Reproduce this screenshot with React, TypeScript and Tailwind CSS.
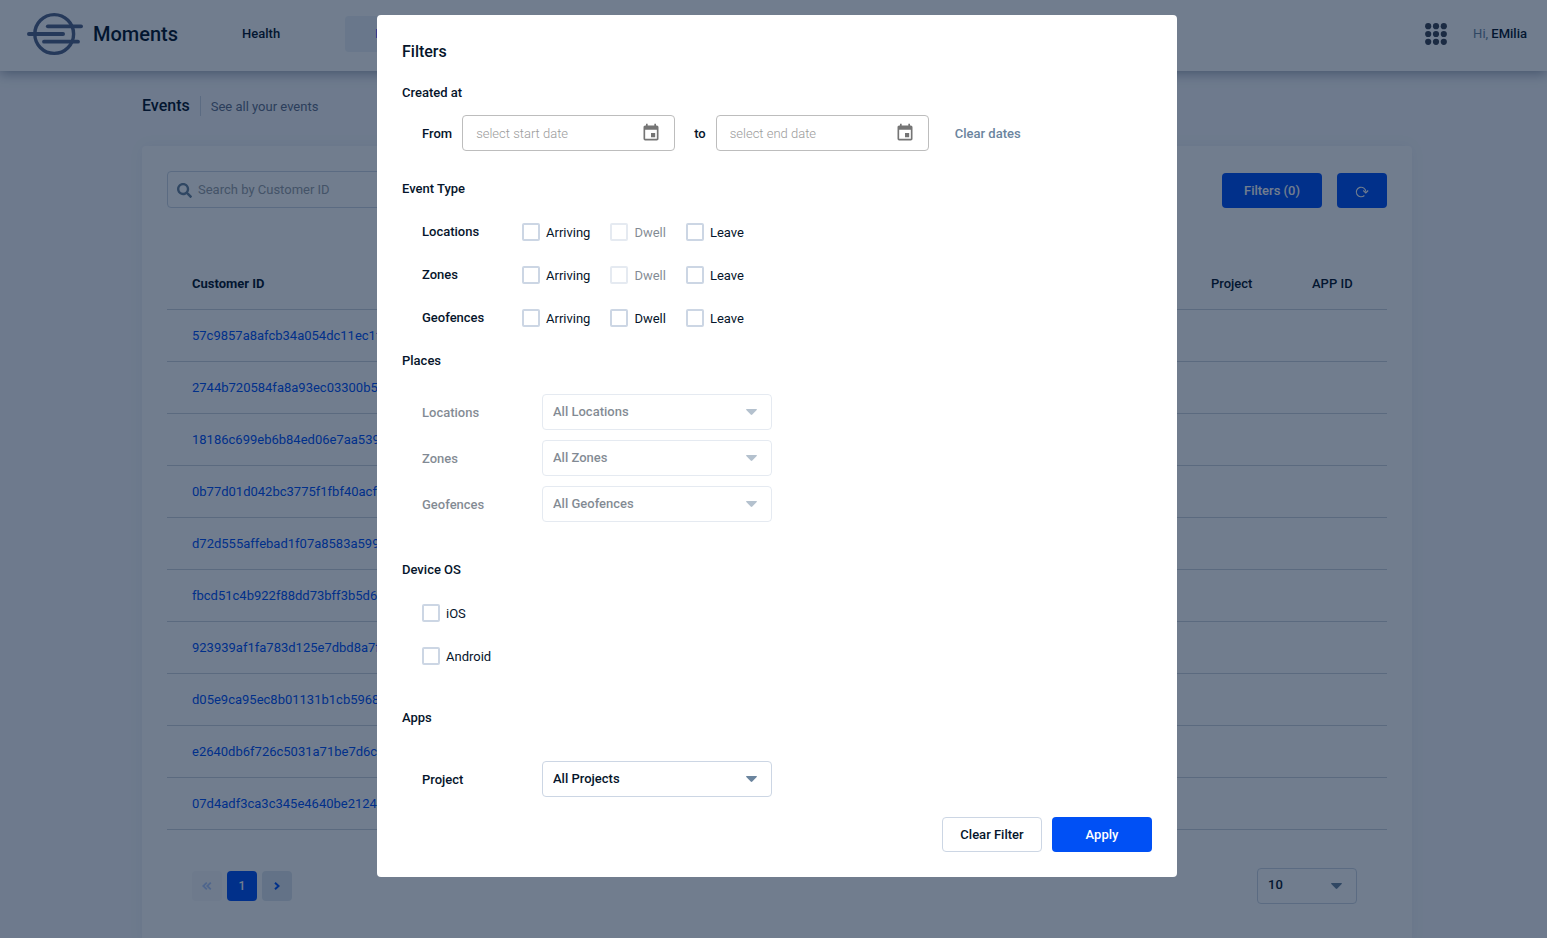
import type { ReactNode } from "react";
import { MdEvent } from "react-icons/md";
import { FaSearch } from "react-icons/fa";

const customerIds = [
  "57c9857a8afcb34a054dc11ec1f",
  "2744b720584fa8a93ec03300b5",
  "18186c699eb6b84ed06e7aa539",
  "0b77d01d042bc3775f1fbf40acf",
  "d72d555affebad1f07a8583a599",
  "fbcd51c4b922f88dd73bff3b5d6",
  "923939af1fa783d125e7dbd8a7f",
  "d05e9ca95ec8b01131b1cb5968",
  "e2640db6f726c5031a71be7d6c",
  "07d4adf3ca3c345e4640be2124",
];

const eventTypes = [
  { name: "Locations", dwell: false },
  { name: "Zones", dwell: false },
  { name: "Geofences", dwell: true },
];

function Logo() {
  return (
    <svg width="56" height="44" viewBox="0 0 56 44" fill="none" stroke="#53658a" aria-hidden="true">
      <circle cx="27.200" cy="22" r="19.400" strokeWidth="3.400" />
      <g strokeWidth="3.800" strokeLinecap="round">
        <path d="M20.800 14.300H54.100" />
        <path d="M1.900 22H36.100" />
        <path d="M17 29.700H51" />
      </g>
    </svg>
  );
}

function AppsGrid() {
  return (
    <svg width="22" height="22" viewBox="0 0 22 22" fill="#3c4456" aria-hidden="true">
      {[3.2, 11, 18.8].map((y) => [3.2, 11, 18.8].map((x) => <circle key={`${x}-${y}`} cx={x} cy={y} r="3.1" />))}
    </svg>
  );
}

function RefreshIcon() {
  return (
    <svg width="14" height="12" viewBox="0 0 14 12" fill="none" stroke="currentColor" strokeWidth="1.1" className="mx-auto mt-[3px]" aria-hidden="true">
      <path d="M9.400 9.500A4.800 4.800 0 1 1 10.900 5.800" />
      <path d="M8.300 4.500L10.800 6.900L13.200 4.500" />
    </svg>
  );
}

function Select({ id, value, disabled = false, label }: { id: string; value: string; disabled?: boolean; label?: string }) {
  return (
    <div className={disabled ? "relative w-full opacity-50" : "relative w-full"}>
      <select
        id={id}
        disabled={disabled}
        aria-label={label}
        className="h-9 w-full appearance-none rounded border border-[#ccd6e4] bg-transparent px-[10px] pb-px text-[13px] font-medium text-[#06152b] opacity-100"
      >
        <option>{value}</option>
      </select>
      <svg className="pointer-events-none absolute top-[15px] right-[15px]" width="11" height="6" viewBox="0 0 11 6" fill="#6b859e" aria-hidden="true">
        <path d="M0.600 0H10.400C10.900 0 11.100 0.500 10.700 0.900L6.300 5.500C5.800 6 5.200 6 4.700 5.500L0.300 0.900C-0.100 0.500 0.100 0 0.600 0Z" />
      </svg>
    </div>
  );
}

function Checkbox({ label, disabled = false }: { label: string; disabled?: boolean }) {
  return (
    <label className={disabled ? "flex h-[18px] items-center gap-[6px] opacity-50" : "flex h-[18px] items-center gap-[6px]"}>
      <input type="checkbox" disabled={disabled} className="size-[18px] appearance-none rounded-xs border-2 border-[#ccd6e4]" />
      <span className="pt-0.5 leading-5">{label}</span>
    </label>
  );
}

function DateField({ id, placeholder }: { id: string; placeholder: string }) {
  return (
    <div className="flex h-9 w-[213px] items-center rounded border border-[#bdbdbd] pr-[13px] pl-[13px]">
      <input id={id} type="text" placeholder={placeholder} className="min-w-0 flex-1 pt-0.5 font-light outline-none placeholder:text-[#9b9b9b]" />
      <button type="button" aria-label="Open calendar">
        <MdEvent size={20} color="#757575" />
      </button>
    </div>
  );
}

function SectionTitle({ children }: { children: ReactNode }) {
  return <h3 className="leading-5 font-medium">{children}</h3>;
}

function FiltersDialog() {
  return (
    <form role="dialog" aria-label="Filters" className="flex w-[800px] flex-col rounded bg-white p-[25px]">
      <h2 className="text-base leading-6 font-medium">Filters</h2>

      <section className="mt-[19px]">
        <SectionTitle>Created at</SectionTitle>
        <div className="mt-3 flex items-center pl-5 font-medium">
          <label htmlFor="from" className="mr-[10px] pt-0.5">From</label>
          <DateField id="from" placeholder="select start date" />
          <label htmlFor="to" className="mr-[10px] ml-[19px] pt-0.5">to</label>
          <DateField id="to" placeholder="select end date" />
          <button type="button" className="ml-[26px] pt-0.5 font-medium text-[#6b859e]">Clear dates</button>
        </div>
      </section>

      <section className="mt-7">
        <SectionTitle>Event Type</SectionTitle>
        <div className="mt-[23px] flex flex-col gap-[25px] pl-5">
          {eventTypes.map((row) => (
            <fieldset key={row.name} className="flex h-[18px] items-center" aria-label={row.name}>
              <span className="w-[100px] leading-5 font-medium">{row.name}</span>
              <div className="flex gap-5">
                <Checkbox label="Arriving" />
                <Checkbox label="Dwell" disabled={!row.dwell} />
                <Checkbox label="Leave" />
              </div>
            </fieldset>
          ))}
        </div>
      </section>

      <section className="mt-[25px]">
        <SectionTitle>Places</SectionTitle>
        <div className="mt-[23px] flex flex-col gap-[10px] pl-5">
          {["Locations", "Zones", "Geofences"].map((name) => (
            <div key={name} className="flex w-[350px] items-center">
              <label htmlFor={name} className="w-[120px] shrink-0 pt-0.5 font-medium opacity-50">{name}</label>
              <Select id={name} value={`All ${name}`} disabled />
            </div>
          ))}
        </div>
      </section>

      <section className="mt-[38px]">
        <SectionTitle>Device OS</SectionTitle>
        <div className="mt-6 flex flex-col items-start gap-[25px] pl-5">
          <Checkbox label="iOS" />
          <Checkbox label="Android" />
        </div>
      </section>

      <section className="mt-[43px]">
        <SectionTitle>Apps</SectionTitle>
        <div className="mt-[33px] flex w-[370px] items-center pl-5">
          <label htmlFor="project" className="w-[120px] shrink-0 pt-0.5 font-medium">Project</label>
          <Select id="project" value="All Projects" />
        </div>
      </section>

      <div className="mt-5 flex justify-end gap-[10px]">
        <button type="reset" className="h-[35px] w-[100px] rounded border border-[#ccd6e4] font-medium">Clear Filter</button>
        <button type="button" className="h-[35px] w-[100px] rounded bg-[#0050f5] font-medium text-white">Apply</button>
      </div>
    </form>
  );
}

export default function App() {
  return (
    <div className="h-screen overflow-hidden bg-[#f7f9fc] font-[Roboto,sans-serif] text-[13px] text-[#06152b]">
      <header className="relative flex h-[71px] items-center bg-white pr-5 pb-[3px] pl-[27px] shadow-[0_2px_12px_rgba(0,20,60,0.4)]">
        <a href="#" className="flex items-center gap-[10px] text-xl font-medium">
          <Logo />
          Moments
        </a>
        <nav className="ml-[34px] flex items-center gap-[35px] font-medium">
          <a href="#" className="flex h-9 items-center px-[30px]">Health</a>
          <a href="#" className="flex h-9 items-center rounded bg-[#ecf2f7] px-[30px] text-[#0050f5]">Events</a>
        </nav>
        <button type="button" aria-label="Applications" className="ml-auto">
          <AppsGrid />
        </button>
        <p className="ml-[26px] text-[#6b859e]">
          Hi, <span className="font-medium text-[#06152b]">EMilia</span>
        </p>
      </header>

      <main className="pl-[7px]">
        <div className="mx-auto max-w-[1270px]">
          <div className="flex h-[75px] items-center pb-[6px]">
            <h1 className="border-r border-[#ccd6e4] pr-[10px] text-base leading-5 font-medium">Events</h1>
            <p className="pt-0.5 pl-[10px] text-[#62708c]">See all your events</p>
          </div>

          <section className="rounded bg-white px-[25px] pt-[25px] pb-10 shadow-[0_0_16px_rgba(0,40,110,0.05)]">
            <div className="flex items-end">
              <label className="flex h-[37px] w-[300px] items-center gap-[6px] rounded border border-[#ccd6e4] px-[9px]">
                <FaSearch size={15} color="#6b859e" className="mt-0.5" aria-hidden="true" />
                <input type="search" aria-label="Search by Customer ID" placeholder="Search by Customer ID" className="min-w-0 flex-1 outline-none placeholder:text-[#999fa8]" />
              </label>
              <button type="button" className="ml-auto h-[35px] w-[100px] rounded bg-[#0050f5] font-medium text-white">Filters (0)</button>
              <button type="button" aria-label="Refresh" className="ml-[15px] h-[35px] w-[50px] rounded bg-[#0050f5] text-white">
                <RefreshIcon />
              </button>
            </div>

            <table className="mt-[49px] w-full table-fixed border-collapse text-left">
              <thead>
                <tr className="h-[52px] border-b border-[#ccd3dc]">
                  <th className="pt-0.5 pl-[25px] font-bold">Customer ID</th>
                  <th className="w-[101px] pt-0.5 font-medium">Project</th>
                  <th className="w-[75px] pt-0.5 font-medium">APP ID</th>
                </tr>
              </thead>
              <tbody>
                {customerIds.map((id) => (
                  <tr key={id} className="h-[52px] border-b border-[#ccd3dc]">
                    <td className="pt-0.5 pl-[25px]">
                      <a href="#" className="text-[#0050f5]">{id}</a>
                    </td>
                    <td />
                    <td />
                  </tr>
                ))}
              </tbody>
            </table>

            <div className="mt-[38px] flex items-center justify-between pr-[30px] pl-[25px]">
              <nav aria-label="Pagination" className="flex gap-[5px] font-medium">
                <button type="button" disabled aria-label="Previous page" className="flex size-[30px] items-center justify-center rounded bg-[#e6edf3] text-[#0050f5] opacity-30">
                  <svg width="10" height="8" viewBox="0 0 10 8" fill="none" stroke="currentColor" strokeWidth="1.8" aria-hidden="true">
                    <path d="M4.800 0.700L1.300 4L4.800 7.300M8.800 0.700L5.300 4L8.800 7.300" />
                  </svg>
                </button>
                <button type="button" className="size-[30px] rounded bg-[#0050f5] text-xs text-white">1</button>
                <button type="button" aria-label="Next page" className="flex size-[30px] items-center justify-center rounded bg-[#dfe7ee] text-[#0050f5]">
                  <svg width="6" height="8" viewBox="0 0 6 8" fill="none" stroke="currentColor" strokeWidth="2" aria-hidden="true">
                    <path d="M1 0.800L4.600 4L1 7.200" />
                  </svg>
                </button>
              </nav>
              <div className="flex w-[100px]">
                <Select id="page-size" value="10" label="Rows per page" />
              </div>
            </div>
          </section>
        </div>
      </main>

      <div className="fixed inset-0 flex items-start justify-center overflow-hidden bg-[rgba(1,24,54,0.56)] pt-[15px] pl-[7px]">
        <FiltersDialog />
      </div>
    </div>
  );
}
